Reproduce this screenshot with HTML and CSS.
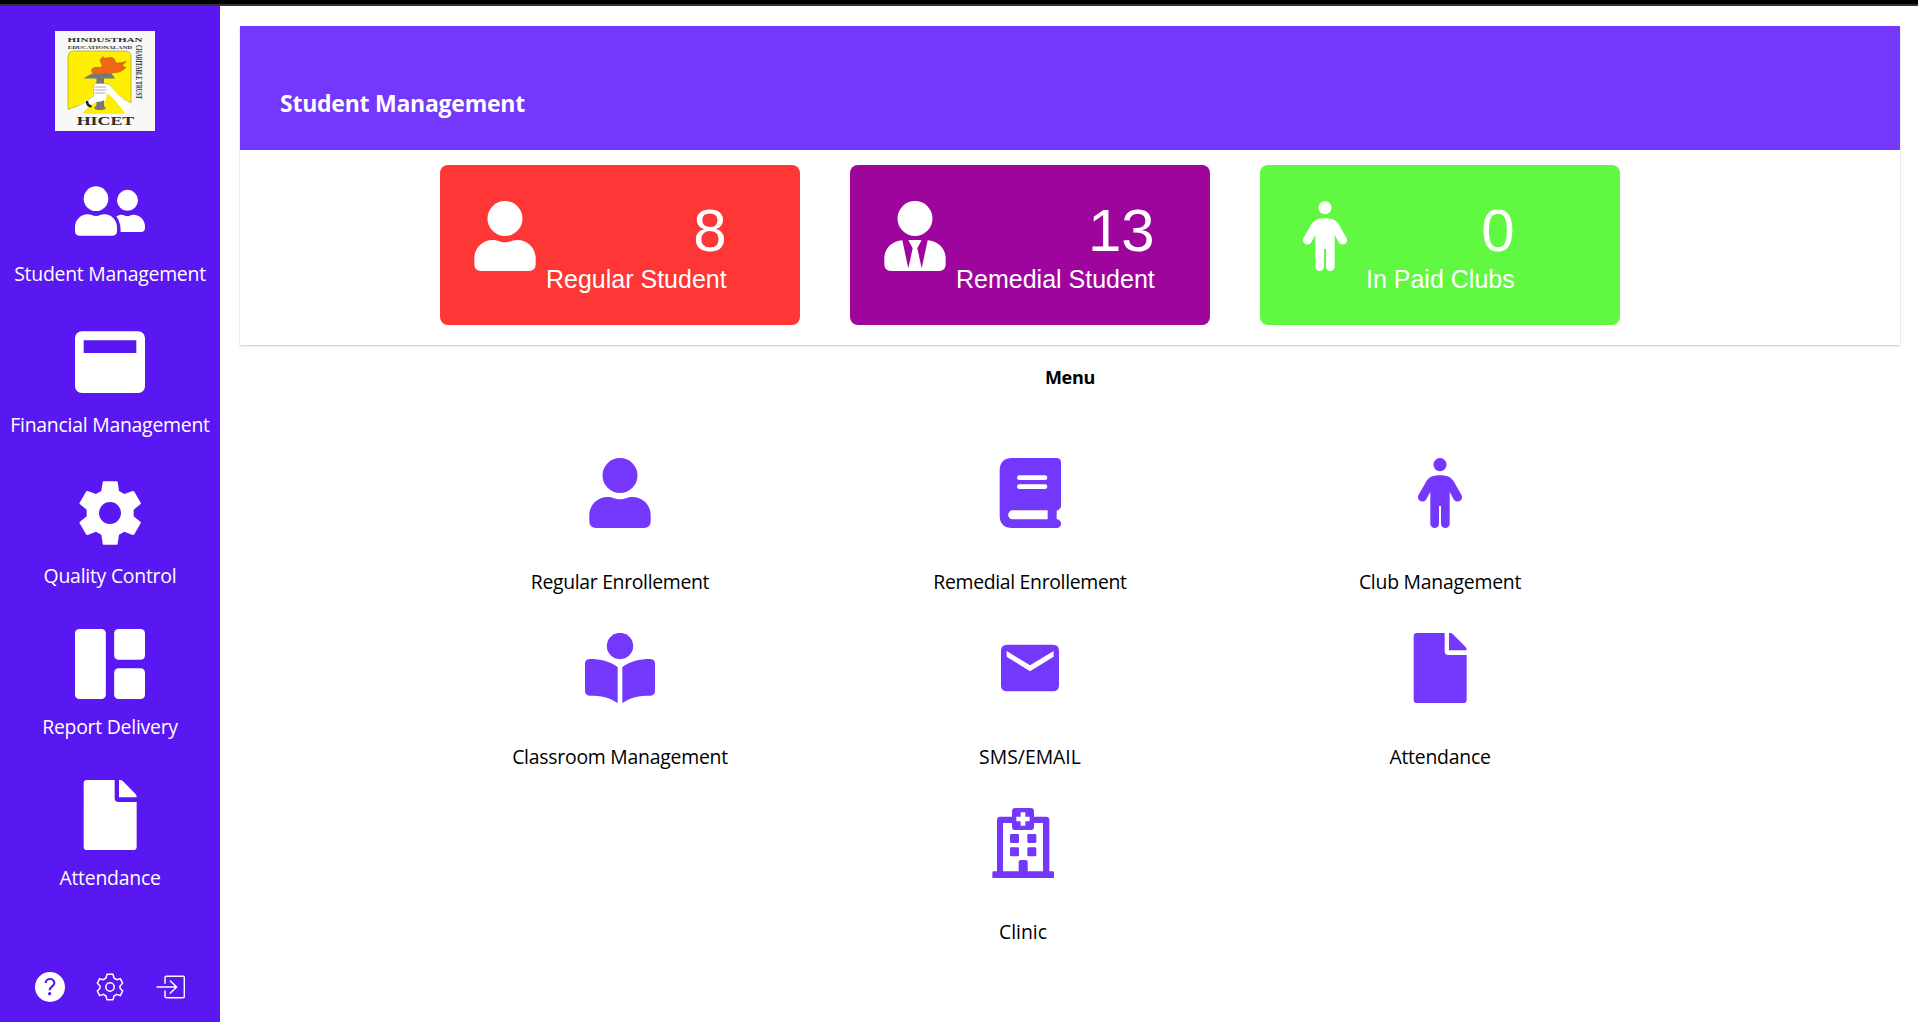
FILE: index.html
```html
<!DOCTYPE html>
<html lang="en">
<head>
<meta charset="utf-8">
<title>Student Management</title>
<link rel="stylesheet" href="styles.css">
</head>
<body>
<svg class="sprite" aria-hidden="true">
  <symbol id="users" viewBox="0 0 210 210"><circle cx="63" cy="68" r="37"/><path d="M38 115c11 0 14 5 25 5s14-5 25-5c22 0 38 18 38 39v12c0 8-5 13-13 13H13c-8 0-13-5-13-13v-12c0-21 16-39 38-39z"/><circle cx="157.500" cy="73" r="31.500"/><path d="M124 121c6-3 10-5 15-5 8 0 11 4 18 4s11-4 18-4c20 0 35 16 35 35v6c0 7-5 11-11 11h-62c0-18-3-34-13-47z"/></symbol>
  <symbol id="finance" viewBox="0 0 210 210"><path fill-rule="evenodd" d="M20 13h170a20 20 0 0 1 20 20v145a20 20 0 0 1-20 20H20a20 20 0 0 1-20-20V33a20 20 0 0 1 20-20zm6 27v38h158V40z"/></symbol>
  <symbol id="gear" viewBox="0 0 210 210"><path fill-rule="evenodd" d="M86 10h39q3 0 3 3l4 26 16 9 25-9q3-1 5 2l19 33q2 3-1 5l-20 16v20l20 16q3 2 1 5l-19 33q-2 3-5 2l-25-10-16 9-4 27q0 3-3 3H86q-3 0-3-3l-4-27-16-9-25 10q-3 1-5-2l-19-33q-2-3 1-5l20-16V95L15 79q-3-2-1-5l19-33q2-3 5-2l25 9 16-9 4-26q0-3 3-3zm19 62a33 33 0 1 0 0 66 33 33 0 0 0 0-66z"/></symbol>
  <symbol id="report" viewBox="0 0 210 210"><rect width="92.500" height="210" rx="13"/><rect x="117.500" width="92.500" height="92.500" rx="13"/><rect x="117.500" y="118" width="92.500" height="92" rx="13"/></symbol>
  <symbol id="file" viewBox="0 0 210 210"><path d="M36 0h83v55q0 11 11 11h55v134q0 10-10 10H36q-10 0-10-10V10Q26 0 36 0z"/><path d="M132 0h3q5 0 9 4l37 37q4 4 4 9v2h-53z"/></symbol>
  <symbol id="person" viewBox="0 0 210 210"><circle cx="105" cy="52.500" r="52.500"/><path d="M68 117c16 0 21 7 37 7s21-7 37-7c32 0 55 25 55 55v18q0 20-20 20H33q-20 0-20-20v-18c0-30 23-55 55-55z"/></symbol>
  <symbol id="tie" viewBox="0 0 210 210"><circle cx="105" cy="52.500" r="52.500"/><path d="M67 118c-31 2-54 25-54 54v18q0 20 20 20h144q20 0 20-20v-18c0-29-23-52-54-54l-18 84-13-60 13-25H85l13 25-13 60z"/></symbol>
  <symbol id="child" viewBox="0 0 210 210"><circle cx="105" cy="19.700" r="19.700"/><path d="M105 52c22 0 33 6 41 18l23 40a13 13 0 0 1-22 15l-13-23v95a13 13 0 0 1-26 0v-53h-6v53a13 13 0 0 1-26 0v-95l-13 23a13 13 0 0 1-22-15l23-40c8-12 19-18 41-18z"/></symbol>
  <symbol id="book" viewBox="0 0 210 210"><path fill-rule="evenodd" d="M52 0h132q14 0 14 14v130q0 10-13 14v26a13 13 0 0 1 0 26H52q-38 0-38-38V38Q14 0 52 0zm21 52a7 7 0 0 0 0 14h77a7 7 0 0 0 0-14zm0 27a7 7 0 0 0 0 14h77a7 7 0 0 0 0-14zM53 157a13.500 13.500 0 0 0 0 27h105v-27z"/></symbol>
  <symbol id="reader" viewBox="0 0 210 210"><circle cx="105" cy="39" r="39.500"/><path d="M14 78c32 0 60 7 84 24v108c-25-17-49-22-84-22q-14-1-14-14V92q0-13 14-14zM196 78c-32 0-60 7-84 24v108c25-17 49-22 84-22q14-1 14-14V92q0-13-14-14z"/></symbol>
  <symbol id="mail" viewBox="0 0 210 210"><path fill-rule="evenodd" d="M36 35h138q18 0 18 18v104q0 18-18 18H36q-18 0-18-18V53q0-18 18-18zm-1 19v17l70 44 71-44V54l-71 43z"/></symbol>
  <symbol id="clinic" viewBox="0 0 210 210"><path fill-rule="evenodd" d="M82 0h46q10 0 10 10v16h36q10 0 10 10v154h10q4 0 4 4v16H13v-16q0-4 4-4h10V36q0-10 10-10h35V10Q72 0 82 0zm16 13v13H85v14h13v13h14V40h13V26h-13V13zM45 45v145h47v-28q0-6 6-6h15q6 0 6 6v28h46V45h-27v11q0 10-10 10H82q-10 0-10-10V45z"/><rect x="66" y="78" width="27" height="27" rx="4"/><rect x="118" y="78" width="27" height="27" rx="4"/><rect x="66" y="118" width="27" height="27" rx="4"/><rect x="118" y="118" width="27" height="27" rx="4"/></symbol>
</svg>
<div class="topbar"></div>
<div class="app">
  <aside class="sidebar">
    <svg class="logo" viewBox="0 0 100 100" role="img" aria-label="HICET">
      <rect width="100" height="100" fill="#f8f8f8"/>
      <g class="logo-text">
        <text x="12.500" y="11" font-size="7" textLength="75" lengthAdjust="spacingAndGlyphs">HINDUSTHAN</text>
        <text x="12.700" y="17.600" font-size="4.600" textLength="64.500" lengthAdjust="spacingAndGlyphs">EDUCATIONALAND</text>
        <text class="logo-side" transform="translate(81.300 14) rotate(90)" font-size="9" textLength="54" lengthAdjust="spacingAndGlyphs">CHARITABLE TRUST</text>
        <text x="21.700" y="93.700" font-size="12" textLength="57.500" lengthAdjust="spacingAndGlyphs">HICET</text>
      </g>
      <path d="M13 26q0-6 6-6h51q6 0 6 6v46c-10-4-17-11-22-19H39v12c-4 2-6 4-10 7-5 3-11 4-16 6.500z" fill="#ffee00" stroke="#a9a02c" stroke-width=".7"/>
      <path d="M28.500 82l8-8 15-5V62c6 4 13 13 18.500 20z" fill="#ffee00" stroke="#a9a02c" stroke-width=".5"/>
      <path d="M13 78.500c8-3 14-5 18-8 4-4 5-6 9-7l12-1c8 6 13 13 18 20 4 0 4-8 6-10-9-4-15-11-22-19H39v11c-5 1-11 10-26 14z" fill="#fff"/>
      <path d="M28.500 82l9-9 14-3V62c6 4 13 13 18.500 20z" fill="#ffee00"/>
      <path d="M29 74c6-6 9-9 12-9h10v5H41l-9 7z" fill="#fff"/>
      <path d="M28.300 47.500l8.200-4.700h20.200l3.500 4.700H49V75l2 2q-1 2-6 2t-6-2l2.500-3V47.500z" fill="#777"/>
      <path d="M39.500 53.500q6-2 12 0V67q-3 4-10 4l-2-8z" fill="#fff"/>
      <path d="M39.500 56h11.500M39.500 59h11.500M39.500 62h11" stroke="#888" stroke-width=".7"/>
      <path d="M32 70q0 5 4.500 5.500" fill="none" stroke="#222" stroke-width="2.500"/>
      <path d="M38 42.500c-4-4 1-7 6-6 6 0 2-4 1-7 0-2 2-2 3-4 1 3 5 1 7 1 3 0 6 2 5 5 3 1 8 0 11-1-1 2-4 3-3 5l3 1c-3 3-7 5-11 5-5 1-9 2-15 1z" fill="#ef6712" stroke="#a95725" stroke-width=".6"/>
    </svg>
    <nav class="side-nav">
      <a class="side-item"><svg class="icon"><use href="#users"/></svg><span class="label">Student Management</span></a>
      <a class="side-item"><svg class="icon"><use href="#finance"/></svg><span class="label">Financial Management</span></a>
      <a class="side-item"><svg class="icon"><use href="#gear"/></svg><span class="label">Quality Control</span></a>
      <a class="side-item"><svg class="icon"><use href="#report"/></svg><span class="label">Report Delivery</span></a>
      <a class="side-item"><svg class="icon"><use href="#file"/></svg><span class="label">Attendance</span></a>
    </nav>
    <div class="side-tools">
      <svg class="tool" viewBox="0 0 90 90"><circle cx="45" cy="45" r="45" fill="#fff"/><path d="M32 33c0-16 26-16 26 0 0 10-14 10-14 22" fill="none" stroke="#5917f2" stroke-width="6.500"/><circle cx="44" cy="65" r="5" fill="#5917f2"/></svg>
      <svg class="tool line" viewBox="0 0 90 90"><path d="M36 7h18l3 11 8 5 11-3 7 14-8 8v7l8 8-7 14-11-4-8 5-3 11H36l-3-11-8-5-11 4-7-14 8-8v-7l-8-8 7-14 11 3 8-5z"/><circle cx="45" cy="45" r="12.500"/></svg>
      <svg class="tool line" viewBox="0 0 90 90"><path d="M30 34V17q0-4 4-4h50q4 0 4 4v56q0 4-4 4H34q-4 0-4-4V57M6 45h59M46 27l19 18-19 18"/></svg>
    </div>
  </aside>
  <main class="content">
    <section class="panel">
      <header class="panel-head"><h1>Student Management</h1></header>
      <div class="cards">
        <article class="card red"><svg class="icon"><use href="#person"/></svg><div class="stat"><span class="number">8</span><span class="caption">Regular Student</span></div></article>
        <article class="card purple"><svg class="icon"><use href="#tie"/></svg><div class="stat"><span class="number">13</span><span class="caption">Remedial Student</span></div></article>
        <article class="card green"><svg class="icon"><use href="#child"/></svg><div class="stat"><span class="number">0</span><span class="caption">In Paid Clubs</span></div></article>
      </div>
    </section>
    <h2>Menu</h2>
    <div class="menu">
      <a class="menu-item"><svg class="icon"><use href="#person"/></svg><span class="label tight">Regular Enrollement</span></a>
      <a class="menu-item"><svg class="icon"><use href="#book"/></svg><span class="label tight">Remedial Enrollement</span></a>
      <a class="menu-item"><svg class="icon"><use href="#child"/></svg><span class="label">Club Management</span></a>
      <a class="menu-item"><svg class="icon"><use href="#reader"/></svg><span class="label">Classroom Management</span></a>
      <a class="menu-item"><svg class="icon"><use href="#mail"/></svg><span class="label plain">SMS/EMAIL</span></a>
      <a class="menu-item"><svg class="icon"><use href="#file"/></svg><span class="label">Attendance</span></a>
      <a class="menu-item clinic"><svg class="icon"><use href="#clinic"/></svg><span class="label plain">Clinic</span></a>
    </div>
  </main>
</div>
</body>
</html>
```
FILE: styles.css
```css
* { box-sizing: border-box; }
body {
  margin: 0;
  height: 1022px;
  overflow: hidden;
  display: flex;
  flex-direction: column;
  background: #fff;
  color: #000;
  font-family: "Segoe UI", "Open Sans", "Noto Sans", sans-serif;
}
.sprite { display: none; }
.topbar { height: 6px; flex: none; background: #000; border-bottom: 2px solid #333; }
.app { flex: 1; display: flex; }

.sidebar {
  width: 220px;
  flex: none;
  display: flex;
  flex-direction: column;
  padding-top: 25px;
  background: #5917f2;
  color: #fff;
}
.logo { width: 100px; height: 100px; margin-left: 55px; overflow: visible; }
.logo-text { font-family: "Liberation Serif", serif; font-weight: 700; fill: #2c2c2c; }
.side-nav { display: flex; flex-direction: column; margin-top: 45px; }
.side-item {
  height: 151px;
  display: flex;
  flex-direction: column;
  align-items: center;
  gap: 14px;
}
.icon { width: 70px; height: 70px; flex: none; fill: currentColor; }
.label { font-size: 19.400px; line-height: 28px; letter-spacing: -.24px; white-space: nowrap; }
.tight { letter-spacing: -.32px; }
.plain { letter-spacing: 0; }
.side-tools { display: flex; gap: 30px; padding-left: 35px; margin-top: 41px; }
.tool { width: 30px; height: 30px; }
.line { fill: none; stroke: #fff; stroke-width: 4.500; stroke-linejoin: round; stroke-linecap: round; }

.content { flex: 1; padding: 20px 18px 0 20px; }
.panel { height: 319px; box-shadow: 0 1px 2px rgba(0, 0, 0, .22); }
.panel-head { height: 124px; padding: 60px 40px 0; background: #7338fc; }
h1 { margin: 0; font-size: 23px; line-height: 34px; font-weight: 700; letter-spacing: -.25px; color: #fff; }
.cards { display: flex; gap: 50px; padding: 15px 0 0 200px; }
.card {
  width: 360px;
  height: 160px;
  display: flex;
  gap: 6px;
  padding: 36px 30px 0;
  border-radius: 8px;
  color: #fff;
  font-family: "Liberation Sans", Arial, sans-serif;
}
.red { background: #fe3636; }
.purple { background: #9e059c; }
.green { background: #61f842; }
.stat { display: flex; flex-direction: column; align-items: flex-end; }
.number { font-size: 60px; line-height: 60px; }
.caption { font-size: 25px; line-height: 30px; margin-top: 3px; white-space: nowrap; }

h2 { margin: 19px 0 0; font-size: 18px; line-height: 26px; font-weight: 700; letter-spacing: -.3px; text-align: center; }
.menu {
  display: grid;
  grid-template-columns: repeat(3, 410px);
  grid-auto-rows: 175px;
  margin: 68px 0 0 175px;
}
.menu-item { display: flex; flex-direction: column; align-items: center; gap: 40px; }
.menu-item .icon { fill: #7338fc; }
.clinic { grid-column: 2; padding-right: 14px; }
```
